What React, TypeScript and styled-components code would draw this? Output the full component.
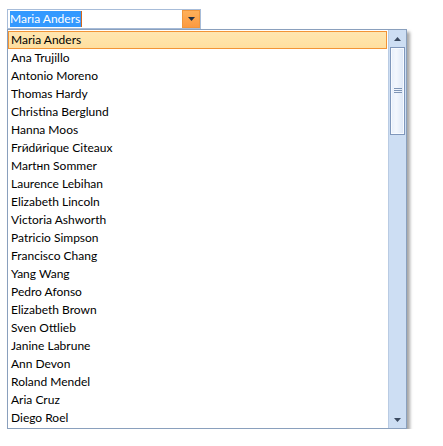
import React from "react";
import styled, { createGlobalStyle } from "styled-components";

const Global = createGlobalStyle`
  html, body { margin: 0; padding: 0; background: #fff; }
  body { font-family: Lato, "Noto Sans", "Liberation Sans", sans-serif; }
`;

const names = [
  "Maria Anders", "Ana Trujillo", "Antonio Moreno", "Thomas Hardy", "Christina Berglund",
  "Hanna Moos", "Frйdйrique Citeaux", "Martнn Sommer", "Laurence Lebihan", "Elizabeth Lincoln",
  "Victoria Ashworth", "Patricio Simpson", "Francisco Chang", "Yang Wang", "Pedro Afonso",
  "Elizabeth Brown", "Sven Ottlieb", "Janine Labrune", "Ann Devon", "Roland Mendel",
  "Aria Cruz", "Diego Roel",
];

const Page = styled.div`
  padding: 9px 0 0 7px;
`;

const Combo = styled.div`
  width: 194px;
  height: 20px;
  box-sizing: border-box;
  border: 1px solid #a7bcd9;
  background: #fff;
  display: flex;
  align-items: center;
  padding: 0 0 0 2px;
`;

const InputText = styled.div`
  flex: 1;
  font-size: 12px;
  line-height: 16px;
  height: 16px;
  display: flex;
  align-items: center;
`;

const Selected = styled.span`
  background: #3399ff;
  color: #fff;
  padding: 0 1px 0 0;
  border-right: 1px solid #d2691e;
`;

const DropButton = styled.div`
  width: 18px;
  height: 18px;
  box-sizing: border-box;
  border: 1px solid #f0963c;
  background: linear-gradient(#ffb05a, #fb9a42);
  display: flex;
  align-items: center;
  justify-content: center;
`;

const Popup = styled.div`
  width: 400px;
  height: 400px;
  box-sizing: border-box;
  border: 1px solid #8aa0bd;
  background: #fff;
  box-shadow: 3px 3px 3px rgba(0, 0, 0, 0.35);
  display: flex;
`;

const Items = styled.div`
  flex: 1;
  padding: 1px 1px 0 0;
  overflow: hidden;
`;

const Item = styled.div<{ $active?: boolean }>`
  height: 18px;
  box-sizing: border-box;
  padding-left: 2px;
  font-size: 12px;
  line-height: 16px;
  color: #000;
  border: 1px solid ${(p) => (p.$active ? "#f29436" : "transparent")};
  background: ${(p) => (p.$active ? "linear-gradient(#ffe6b0, #ffdf9f)" : "transparent")};
  white-space: nowrap;
`;

const Scrollbar = styled.div`
  width: 17px;
  background: #cddef3;
  border-left: 1px solid #b9cbe3;
  display: flex;
  flex-direction: column;
`;

const ArrowBtn = styled.div`
  height: 17px;
  display: flex;
  align-items: center;
  justify-content: center;
`;

const Thumb = styled.div`
  margin: 0 1px;
  height: 88px;
  box-sizing: border-box;
  border: 1px solid #7f97bb;
  background: linear-gradient(90deg, #e6eefa, #f3f7fd 40%, #dbe6f6);
  box-shadow: inset 0 0 0 1px #f8fbff;
  display: flex;
  align-items: center;
  justify-content: center;
`;

const Track = styled.div`
  flex: 1;
`;

const Tri = ({ up }: { up?: boolean }) => (
  <svg width="7" height="4" viewBox="0 0 7 4">
    <path d={up ? "M0 4 L3.5 0 L7 4 Z" : "M0 0 L7 0 L3.5 4 Z"} fill="#3b4a60" />
  </svg>
);

const Grip = () => (
  <svg width="8" height="6" viewBox="0 0 8 6">
    <path d="M0 0.5 H8 M0 2.5 H8 M0 4.5 H8" stroke="#7f95b5" strokeWidth="1" />
  </svg>
);

export default function App() {
  return (
    <Page>
      <Global />
      <Combo>
        <InputText>
          <Selected>Maria Anders</Selected>
        </InputText>
        <DropButton>
          <svg width="7" height="4" viewBox="0 0 7 4">
            <path d="M0 0 L7 0 L3.5 4 Z" fill="#1f2e44" />
          </svg>
        </DropButton>
      </Combo>
      <Popup>
        <Items>
          {names.map((n, i) => (
            <Item key={n} $active={i === 0}>{n}</Item>
          ))}
        </Items>
        <Scrollbar>
          <ArrowBtn><Tri up /></ArrowBtn>
          <Thumb><Grip /></Thumb>
          <Track />
          <ArrowBtn><Tri /></ArrowBtn>
        </Scrollbar>
      </Popup>
    </Page>
  );
}
